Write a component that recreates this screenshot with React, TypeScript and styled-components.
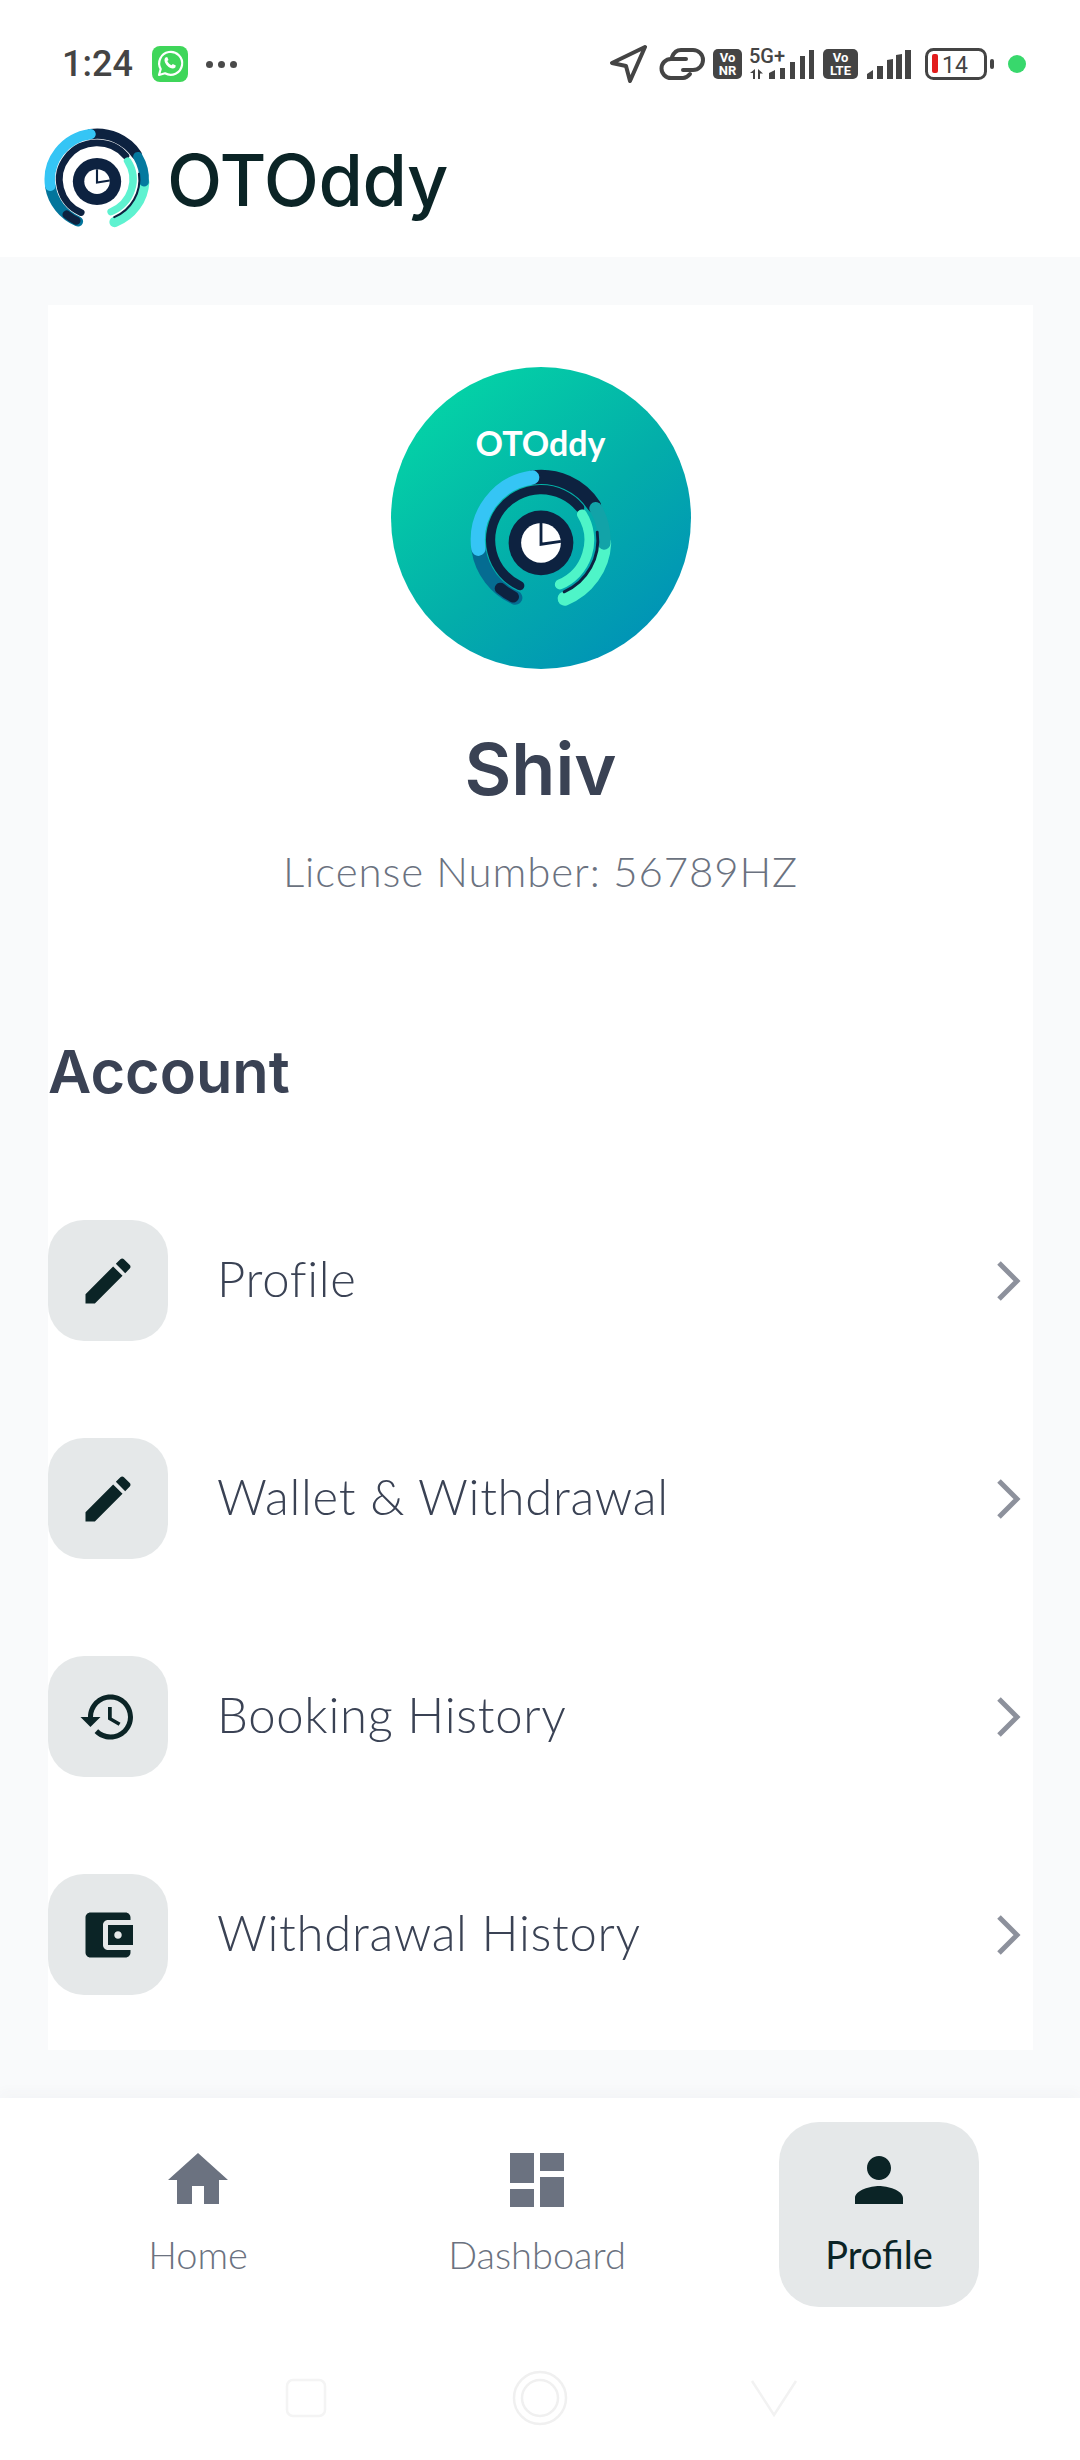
import React from 'react';
import styled, { createGlobalStyle } from 'styled-components';

const GlobalStyle = createGlobalStyle`
  html, body {
    margin: 0;
    padding: 0;
    background: #ffffff;
    font-family: 'Lato', 'Noto Sans', sans-serif;
  }
  * { box-sizing: border-box; }
`;

const Screen = styled.div`
  width: 1080px;
  height: 2460px;
  display: flex;
  flex-direction: column;
  overflow: hidden;
  background: #f9fafb;
`;

const StatusBar = styled.div`
  height: 104px;
  flex: none;
  display: flex;
  align-items: center;
  justify-content: space-between;
  padding: 24px 54px 0 62px;
  background: #ffffff;
`;

const StatusLeft = styled.div`
  display: flex;
  align-items: center;
`;

const StatusTime = styled.span`
  font-family: 'Roboto', sans-serif;
  font-weight: 500;
  font-size: 36px;
  color: #444444;
  margin-right: 19px;
`;

const StatusDots = styled.div`
  display: flex;
  gap: 5px;
  margin-left: 18px;
`;

const StatusDot = styled.span`
  width: 7px;
  height: 7px;
  border-radius: 50%;
  background: #4a4a4a;
`;

const StatusRight = styled.div`
  display: flex;
  align-items: center;
`;

const BatteryDot = styled.span`
  width: 18px;
  height: 18px;
  border-radius: 50%;
  background: #38d86c;
  margin-left: 13px;
`;

const Header = styled.header`
  height: 153px;
  flex: none;
  display: flex;
  align-items: flex-start;
  padding: 24px 0 0 44px;
  background: #ffffff;
`;

const BrandName = styled.h1`
  margin: 7px 0 0 17px;
  font-family: 'Inter', sans-serif;
  font-weight: 500;
  font-size: 72px;
  line-height: 90px;
  letter-spacing: -0.5px;
  color: #0b2426;
`;

const Main = styled.main`
  flex: 1;
  padding: 48px 47px 48px 48px;
  background: #f9fafb;
`;

const Card = styled.section`
  height: 1745px;
  background: #ffffff;
  padding-top: 62px;
  display: flex;
  flex-direction: column;
`;

const Avatar = styled.div`
  width: 300px;
  height: 302px;
  border-radius: 50%;
  align-self: center;
  display: flex;
  flex-direction: column;
  align-items: center;
  padding-top: 56px;
  background: linear-gradient(140deg, #04d6a6 8%, #03adaa 55%, #0090b8 92%);
`;

const AvatarTitle = styled.span`
  font-family: 'Lato', sans-serif;
  font-weight: 700;
  font-size: 34px;
  line-height: 40px;
  color: #ffffff;
  margin-bottom: 6px;
`;

const UserName = styled.h2`
  margin: 56px 0 0;
  text-align: center;
  font-family: 'Inter', sans-serif;
  font-weight: 600;
  font-size: 72px;
  line-height: 88px;
  color: #3a4254;
`;

const License = styled.p`
  margin: 31px 0 0;
  text-align: center;
  font-weight: 300;
  font-size: 42px;
  line-height: 54px;
  letter-spacing: 0.9px;
  color: #6b7280;
`;

const SectionTitle = styled.h3`
  margin: 137px 0 0;
  font-family: 'Inter', sans-serif;
  font-weight: 600;
  font-size: 59.5px;
  line-height: 72px;
  color: #3a4254;
`;

const Menu = styled.ul`
  list-style: none;
  margin: 113px 0 0;
  padding: 0;
  display: flex;
  flex-direction: column;
  gap: 97px;
`;

const MenuRow = styled.li`
  display: flex;
  align-items: center;
  height: 121px;
`;

const MenuIcon = styled.div`
  width: 120px;
  height: 121px;
  flex: none;
  border-radius: 36px;
  display: flex;
  align-items: center;
  justify-content: center;
  background: #e5e8e9;
  color: #0b2426;
`;

const MenuLabel = styled.span`
  flex: 1;
  margin-left: 49px;
  padding-bottom: 6px;
  font-weight: 300;
  font-size: 49px;
  letter-spacing: 0.7px;
  color: #3a4254;
`;

const Chevron = styled.svg`
  width: 32px;
  height: 44px;
  flex: none;
  margin-right: 8px;
`;

const BottomNav = styled.nav`
  height: 363px;
  flex: none;
  background: #ffffff;
  box-shadow: 0 -6px 12px rgba(60, 70, 90, 0.03);
  display: flex;
  flex-direction: column;
`;

const Tabs = styled.div`
  height: 255px;
  display: flex;
  padding: 24px 0 0 0;
`;

const Tab = styled.div<{ $offset: number; $active?: boolean }>`
  width: 200px;
  height: 185px;
  margin-left: ${(p) => p.$offset}px;
  border-radius: 40px;
  display: flex;
  flex-direction: column;
  align-items: center;
  padding-top: 22px;
  background: ${(p) => (p.$active ? '#e5e8e9' : 'transparent')};
  color: ${(p) => (p.$active ? '#0b2426' : '#6b7280')};
`;

const TabLabel = styled.span<{ $active?: boolean }>`
  margin-top: 15px;
  font-weight: ${(p) => (p.$active ? 400 : 300)};
  font-size: 38px;
  line-height: 46px;
`;

const SystemNav = styled.div`
  flex: 1;
  display: flex;
  justify-content: center;
  align-items: center;
  padding-bottom: 18px;
`;

const SystemSlot = styled.div`
  width: 234px;
  display: flex;
  justify-content: center;
`;

const polar = (r: number, deg: number) => {
  const a = ((deg - 90) * Math.PI) / 180;
  return [50 + r * Math.cos(a), 50 + r * Math.sin(a)];
};

const arc = (r: number, from: number, to: number) => {
  const [x1, y1] = polar(r, from);
  const [x2, y2] = polar(r, to);
  const large = (to - from + 360) % 360 > 180 ? 1 : 0;
  return `M${x1.toFixed(2)} ${y1.toFixed(2)}A${r} ${r} 0 ${large} 1 ${x2.toFixed(2)} ${y2.toFixed(2)}`;
};

type LogoProps = { width: number; height: number; clock: number; mint?: string; deep?: string; teal?: string };

const LogoRings = ({ width, height, clock, mint = '#5ef2d0', deep = '#03759c', teal = '#04799f' }: LogoProps) => (
  <svg width={width} height={height} viewBox="0 0 100 100" preserveAspectRatio="none" fill="none" strokeLinecap="round">
    <path d={arc(44.5, 204, 261)} stroke={deep} strokeWidth="10" />
    <path d={arc(44.5, 93, 158)} stroke={mint} strokeWidth="10" />
    <path d={arc(44.5, 352, 57)} stroke="#0d2240" strokeWidth="10" />
    <path d={arc(44.5, 262, 352)} stroke="#35c5f5" strokeWidth="10" />
    <path d={arc(44.5, 60, 93)} stroke={teal} strokeWidth="9" />
    <path d={arc(44.5, 206, 220)} stroke="#0d2240" strokeWidth="8" />
    <path d={arc(35.5, 205, 50)} stroke="#0d2240" strokeWidth="6.5" />
    <path d={arc(34, 58, 157)} stroke={mint} strokeWidth="7" />
    <path d={arc(40, 82, 156)} stroke="#0d2240" strokeWidth="2" />
    <circle cx="50" cy="52" r="22.8" fill="#0d2240" />
    <circle cx="50" cy="52" r={clock} fill="#ffffff" />
    <path d={`M50 ${52 - clock}v${clock + 1}l${clock} -2`} stroke="#0d2240" strokeWidth="2" strokeLinecap="butt" />
  </svg>
);

const LocationIcon = () => (
  <svg width="38" height="38" viewBox="0 0 38 38" fill="none" stroke="#444" strokeWidth="4" strokeLinejoin="round" style={{ marginRight: 1 }}>
    <path d="M36 2 3 18l14 3 4 15z" />
  </svg>
);

const LinkIcon = () => (
  <svg width="46" height="32" viewBox="0 0 46 32" fill="none" stroke="#444" strokeWidth="4" strokeLinecap="round" style={{ marginLeft: 11 }}>
    <path d="M13 9C15 4 18 2 22 2h12a9.500 9.500 0 0 1 0 20H24" />
    <path d="M27 11H12a9.500 9.500 0 0 0 0 19h12c3 0 5-1.500 7-4" />
  </svg>
);

const RadioTile = ({ width, top, bottom, gap }: { width: number; top: string; bottom: string; gap: number }) => (
  <svg width={width} height="30" viewBox={`0 0 ${width} 30`} style={{ marginLeft: gap }}>
    <rect width={width} height="30" rx="5" fill="#444" />
    <text x={width / 2} y="13" textAnchor="middle" fontFamily="Roboto, sans-serif" fontWeight="700" fontSize="13" fill="#fff">{top}</text>
    <text x={width / 2} y="26" textAnchor="middle" fontFamily="Roboto, sans-serif" fontWeight="700" fontSize="13" fill="#fff">{bottom}</text>
  </svg>
);

const Signal5G = () => (
  <svg width="66" height="32" viewBox="0 0 66 32" style={{ marginLeft: 7, overflow: 'visible' }}>
    <text x="0" y="15" fontFamily="Roboto, sans-serif" fontWeight="500" fontSize="20" fill="#444">5G+</text>
    <path d="M1 25l5-4v10H4v-6zM9 21l5 4.500h-3V31H9z" fill="#444" />
    <path d="M20 25l6-3v9h-6zM31 20h5v11h-5zM41 14h5v17h-5zM51 8h5v23h-5zM60 2h5v29h-5z" fill="#444" />
  </svg>
);

const SignalBars = () => (
  <svg width="44" height="30" viewBox="0 0 44 30" style={{ marginLeft: 9 }}>
    <path d="M0 25l6-4v9H0zM10 17h6v13h-6zM20 11l6-1v20h-6zM29 6l6-1v25h-6zM38 1h6v29h-6z" fill="#444" />
  </svg>
);

const BatteryIcon = () => (
  <svg width="70" height="32" viewBox="0 0 70 32" style={{ marginLeft: 14 }}>
    <rect x="1.5" y="1.5" width="59" height="29" rx="7" fill="none" stroke="#444" strokeWidth="3" />
    <rect x="7" y="6" width="6" height="19" rx="2" fill="#e21d1d" />
    <text x="17" y="25" fontFamily="Roboto, sans-serif" fontSize="23" fill="#444">14</text>
    <rect x="65" y="11" width="4" height="10" rx="2" fill="#444" />
  </svg>
);

const WhatsAppIcon = () => (
  <svg width="36" height="36" viewBox="0 0 36 36">
    <rect width="36" height="36" rx="8" fill="#3fd65a" />
    <path d="M7 29l1.700-6A11.500 11.500 0 1 1 13 27.300z" fill="none" stroke="#fff" strokeWidth="2.200" strokeLinejoin="round" />
    <path d="M13.500 11.500c-2 2-.8 5.500 1.800 8.200s6 3.700 8 1.800l.5-2-3-1.500-1.300 1.300c-1.800-.8-3.500-2.500-4.200-4.200l1.200-1.200-1.300-3z" fill="#fff" />
  </svg>
);

const MaterialIcon = ({ d, size }: { d: string; size: number }) => (
  <svg width={size} height={size} viewBox="0 0 24 24" fill="currentColor">
    <path d={d} />
  </svg>
);

const EDIT = 'M3 17.25V21h3.75L17.81 9.94l-3.75-3.75L3 17.25zM20.71 7.04c.39-.39.39-1.02 0-1.41l-2.34-2.34c-.39-.39-1.02-.39-1.41 0l-1.83 1.83 3.75 3.75 1.83-1.83z';
const HISTORY = 'M13 3c-4.97 0-9 4.03-9 9H1l3.89 3.89.07.14L9 12H6c0-3.87 3.13-7 7-7s7 3.13 7 7-3.13 7-7 7c-1.93 0-3.68-.79-4.94-2.06l-1.42 1.42C8.27 19.99 10.51 21 13 21c4.97 0 9-4.03 9-9s-4.03-9-9-9zm-1 5v5l4.28 2.54.72-1.21-3.5-2.08V8H12z';
const WALLET = 'M21 18v1c0 1.1-.9 2-2 2H5c-1.11 0-2-.9-2-2V5c0-1.1.89-2 2-2h14c1.1 0 2 .9 2 2v1h-9c-1.11 0-2 .9-2 2v8c0 1.1.89 2 2 2h9zm-9-2h10V8H12v8zm4-2.500c-.83 0-1.500-.67-1.500-1.500s.67-1.500 1.500-1.500 1.500.67 1.500 1.500-.67 1.500-1.500 1.500z';
const HOME = 'M10 20v-6h4v6h5v-8h3L12 3 2 12h3v8z';
const DASHBOARD = 'M3 13h8V3H3v10zm0 8h8v-6H3v6zm10 0h8V11h-8v10zm0-18v6h8V3h-8z';
const PERSON = 'M12 12c2.210 0 4-1.790 4-4s-1.790-4-4-4-4 1.790-4 4 1.790 4 4 4zm0 2c-2.670 0-8 1.340-8 4v2h16v-2c0-2.660-5.330-4-8-4z';

const menuItems = [
  { label: 'Profile', icon: EDIT },
  { label: 'Wallet & Withdrawal', icon: EDIT },
  { label: 'Booking History', icon: HISTORY },
  { label: 'Withdrawal History', icon: WALLET },
];

const App = () => (
  <Screen>
    <GlobalStyle />
    <StatusBar>
      <StatusLeft>
        <StatusTime>1:24</StatusTime>
        <WhatsAppIcon />
        <StatusDots>
          <StatusDot />
          <StatusDot />
          <StatusDot />
        </StatusDots>
      </StatusLeft>
      <StatusRight>
        <LocationIcon />
        <LinkIcon />
        <RadioTile width={29} top="Vo" bottom="NR" gap={8} />
        <Signal5G />
        <RadioTile width={35} top="Vo" bottom="LTE" gap={8} />
        <SignalBars />
        <BatteryIcon />
        <BatteryDot />
      </StatusRight>
    </StatusBar>
    <Header>
      <LogoRings width={106} height={103} clock={12} />
      <BrandName>OTOddy</BrandName>
    </Header>
    <Main>
      <Card>
        <Avatar>
          <AvatarTitle>OTOddy</AvatarTitle>
          <LogoRings width={142} height={142} clock={14} mint="#4ef5c8" deep="#056c92" teal="#12a3a8" />
        </Avatar>
        <UserName>Shiv</UserName>
        <License>License Number: 56789HZ</License>
        <SectionTitle>Account</SectionTitle>
        <Menu>
          {menuItems.map((item) => (
            <MenuRow key={item.label}>
              <MenuIcon>
                <MaterialIcon d={item.icon} size={60} />
              </MenuIcon>
              <MenuLabel>{item.label}</MenuLabel>
              <Chevron viewBox="0 0 32 44" fill="none" stroke="#8d919c" strokeWidth="5">
                <path d="M6 4l18 18L6 40" />
              </Chevron>
            </MenuRow>
          ))}
        </Menu>
      </Card>
    </Main>
    <BottomNav>
      <Tabs>
        <Tab $offset={98}>
          <MaterialIcon d={HOME} size={72} />
          <TabLabel>Home</TabLabel>
        </Tab>
        <Tab $offset={139}>
          <MaterialIcon d={DASHBOARD} size={72} />
          <TabLabel>Dashboard</TabLabel>
        </Tab>
        <Tab $offset={142} $active>
          <MaterialIcon d={PERSON} size={72} />
          <TabLabel $active>Profile</TabLabel>
        </Tab>
      </Tabs>
      <SystemNav>
        <SystemSlot>
          <svg width="42" height="40" viewBox="0 0 42 40" fill="none" stroke="#f4f4f4" strokeWidth="2.500">
            <rect x="2" y="2" width="38" height="36" rx="6" />
          </svg>
        </SystemSlot>
        <SystemSlot>
          <svg width="56" height="56" viewBox="0 0 56 56" fill="none" stroke="#f0f0f0" strokeWidth="2.500">
            <circle cx="28" cy="28" r="26" />
            <circle cx="28" cy="28" r="18" />
          </svg>
        </SystemSlot>
        <SystemSlot>
          <svg width="48" height="38" viewBox="0 0 48 38" fill="none" stroke="#f2f2f2" strokeWidth="2.500">
            <path d="M2 2l22 34L46 2" />
          </svg>
        </SystemSlot>
      </SystemNav>
    </BottomNav>
  </Screen>
);

export default App;
